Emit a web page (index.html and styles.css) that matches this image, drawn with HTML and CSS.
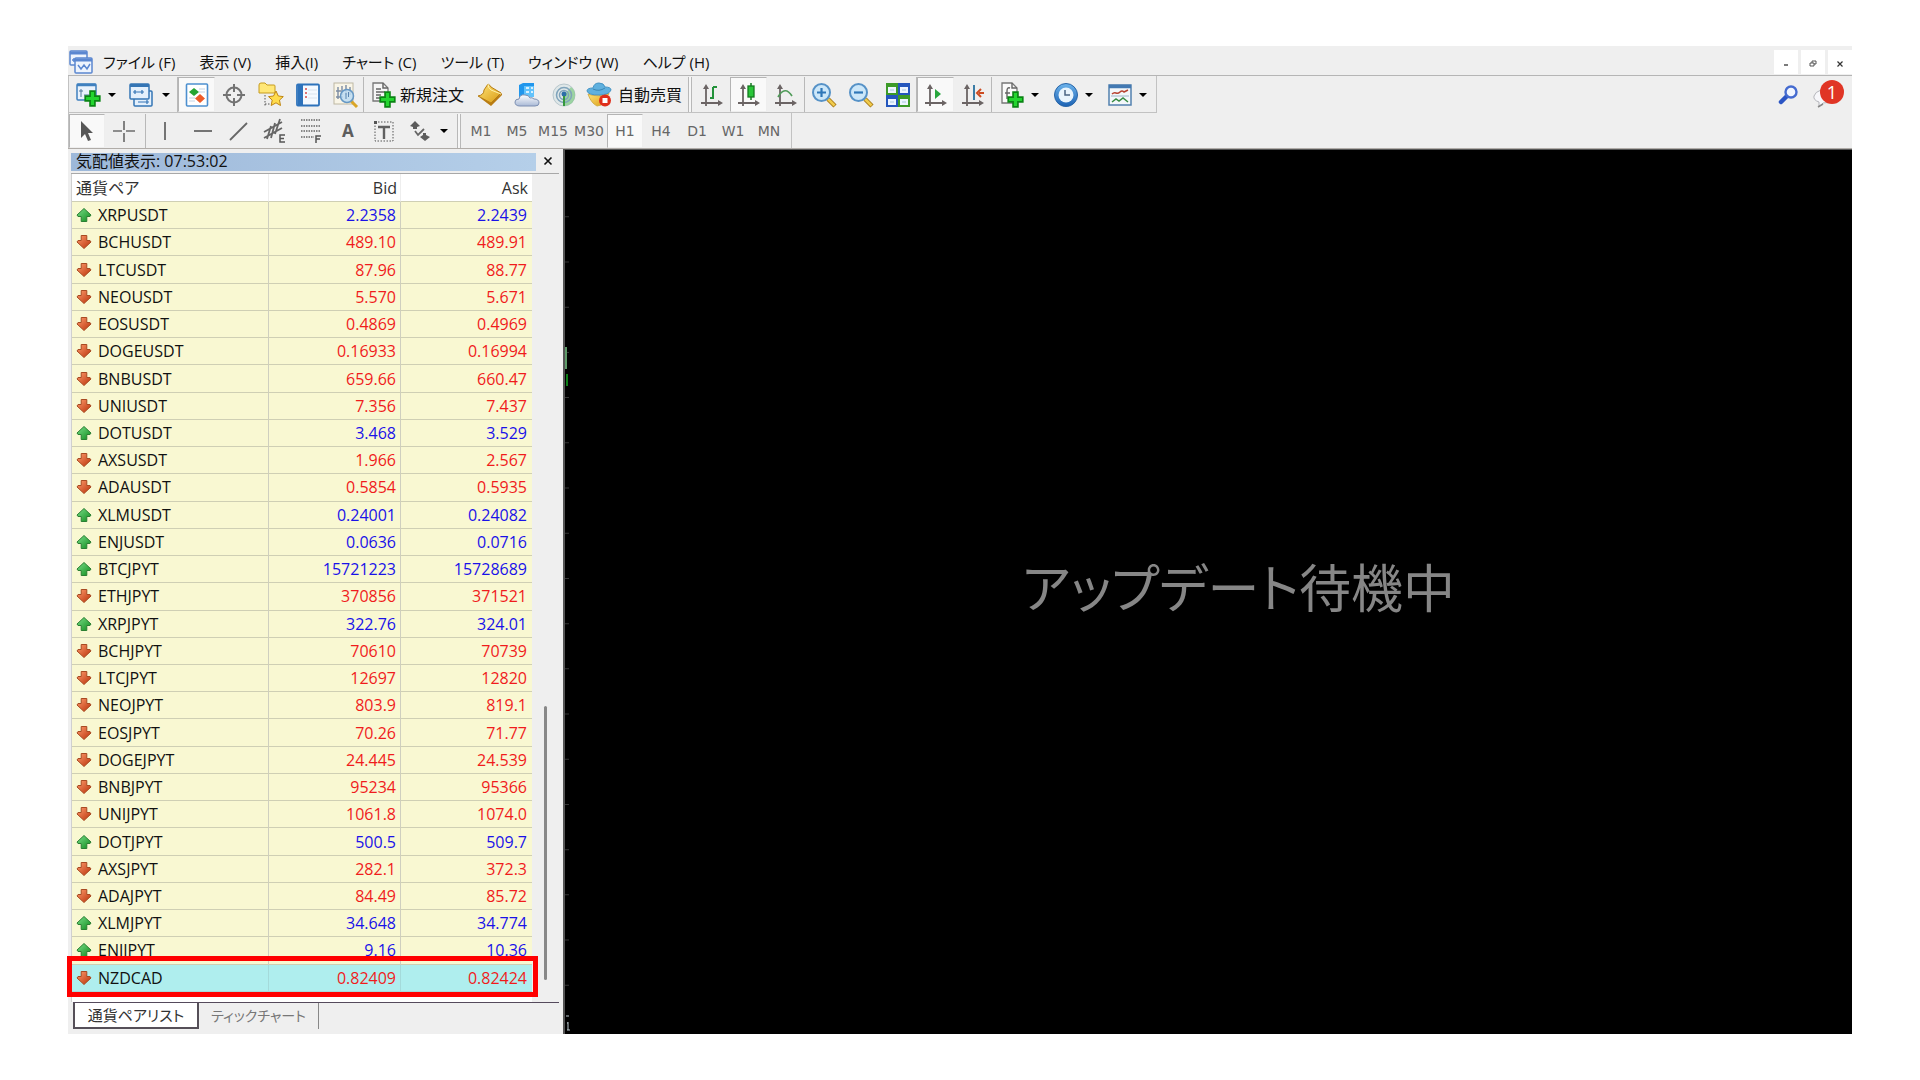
FILE: index.html
```html
<!DOCTYPE html>
<html lang="ja">
<head>
<meta charset="utf-8">
<title>気配値表示</title>
<link rel="stylesheet" href="styles.css">
</head>
<body>
<svg class="defs" aria-hidden="true">
  <defs>
    <linearGradient id="gGreen" x1="0" y1="0" x2="1" y2="1"><stop offset="0" stop-color="#7be08a"/><stop offset="1" stop-color="#0f8a1c"/></linearGradient>
    <linearGradient id="gRed" x1="0" y1="0" x2="1" y2="1"><stop offset="0" stop-color="#ff9d6e"/><stop offset="1" stop-color="#b82f08"/></linearGradient>
    <linearGradient id="gGold" x1="0" y1="0" x2="1" y2="1"><stop offset="0" stop-color="#ffe57a"/><stop offset="1" stop-color="#d99a12"/></linearGradient>
    <linearGradient id="gBlue" x1="0" y1="0" x2="0" y2="1"><stop offset="0" stop-color="#6db4ec"/><stop offset="1" stop-color="#1c62b4"/></linearGradient>
    <linearGradient id="gCloud" x1="0" y1="0" x2="0" y2="1"><stop offset="0" stop-color="#ffffff"/><stop offset="1" stop-color="#a9b9d6"/></linearGradient>
    <symbol id="up" viewBox="0 0 16 14"><path d="M8 .5 15 7 14 8.500H10.800V13.500H5.200V8.500H2L1 7z" fill="url(#gGreen)" stroke="#2b7f33"/></symbol>
    <symbol id="down" viewBox="0 0 16 14"><path d="M8 13.500 15 7 14 5.500H10.800V.5H5.200V5.500H2L1 7z" fill="url(#gRed)" stroke="#a84a22"/></symbol>
    <symbol id="plus" viewBox="0 0 14 14"><path d="M5 1h4v4h4v4H9v4H5V9H1V5h4z" fill="#23d52f" stroke="#0a8414" stroke-width="1.400"/></symbol>
    <symbol id="axes" viewBox="0 0 24 24"><path d="M6 3v20M1 20h19" stroke="#6b6464" stroke-width="1.800"/><path d="M3 6L6 1l3 5zM18 17l5 3-5 3z" fill="#6b6464"/></symbol>
  </defs>
</svg>
<main class="app">
  <header class="menubar">
    <svg class="logo" viewBox="0 0 24 24"><g fill="#eef4fd" stroke="#5b87d0" stroke-width="1.500"><rect x="1" y="1" width="17" height="14" rx="1"/><path d="M1 3h17" stroke-width="3"/><path d="M3 10h4M5 8v4"/><rect x="6" y="8" width="17" height="15" rx="1"/><path d="M6 10h17" stroke-width="3"/><path d="M9 15l3 4 3-4 3 4 3-5" fill="none"/></g></svg>
    <nav class="menus">
      <button>ファイル (F)</button><button>表示 (V)</button><button>挿入(I)</button><button>チャート (C)</button><button>ツール (T)</button><button>ウィンドウ (W)</button><button>ヘルプ (H)</button>
    </nav>
    <div class="window-buttons">
      <button aria-label="最小化"><svg viewBox="0 0 8 8"><path d="M2 5h4" stroke="#333" stroke-width="1.300"/></svg></button>
      <button aria-label="元に戻す"><svg viewBox="0 0 8 8"><path d="M3 3V1h4v3H5M1 3h4v3H1z" fill="none" stroke="#444" stroke-width=".9"/></svg></button>
      <button aria-label="閉じる"><svg viewBox="0 0 8 8"><path d="M1.500 1.500l5 5M6.500 1.500l-5 5" stroke="#333" stroke-width="1.200"/></svg></button>
    </div>
  </header>

  <div class="toolbar-row">
    <div class="toolbar standard">
      <button class="tool drop" aria-label="新規チャート"><svg viewBox="0 0 24 24"><rect x="0" y="1" width="19" height="16" rx="1" fill="#e9f2fc" stroke="#3f80bf" stroke-width="1.500"/><path d="M0 2h19" stroke="#3f80bf" stroke-width="2.500"/><path d="M4 6v8M2 8h4M7 12h5" stroke="#52789d"/><use href="#plus" x="7" y="7" width="17" height="17"/></svg><i class="caret"></i></button>
      <button class="tool drop" aria-label="プロファイル"><svg viewBox="0 0 24 24"><g fill="#e4f0fc" stroke="#3475b5" stroke-width="1.500"><rect x="3" y="8" width="18" height="15" rx="1"/><rect x="-1" y="1" width="19" height="15" rx="1"/><path d="M-1 2.500h19" stroke-width="3"/><path d="M2 9h11M4 7v4M11 7v4M7 19h11M16 17v4" stroke-width="1.200"/></g></svg><i class="caret"></i></button>
      <span class="sep"></span>
      <button class="tool on" aria-label="気配値表示"><svg viewBox="0 0 24 24"><rect x="1.500" y="1" width="21" height="22" rx="1" fill="#fff" stroke="#4d90cf" stroke-width="1.600"/><path d="M14 6h6M14 9h6M4 15h6M4 18h6" stroke="#c3d3e4"/><path d="M9 5l5 4-5 4-5-4z" fill="#27a532"/><path d="M15 11l5 4.500-5 4.500-5-4.500z" fill="#ee5b28"/></svg></button>
      <button class="tool" aria-label="データウィンドウ"><svg viewBox="0 0 24 24"><g fill="none" stroke="#737373" stroke-width="2"><circle cx="12" cy="12" r="7.500"/><path d="M12 1v8M12 15v8M1 12h8M15 12h8"/></g></svg></button>
      <button class="tool" aria-label="ナビゲーター"><svg viewBox="0 0 24 24"><path d="M0 2q0-2 2-2h4l2 2h7q1 0 1 1v7H0z" fill="#ffe777" stroke="#c69b1f"/><path d="M6 12v11M6 21h6" stroke="#555" stroke-dasharray="1.500 1.500"/><path d="M17 8l2.300 5 5 .6-3.800 3.500 1 5.400L17 19.800l-4.800 2.700 1-5.400L9.500 13.600l5-.6z" fill="#ffdc4c" stroke="#bf8613"/></svg></button>
      <button class="tool" aria-label="ターミナル"><svg viewBox="0 0 24 24"><rect x="1" y="1.500" width="22" height="21" rx="1" fill="#f4f9ff" stroke="#2d72bb" stroke-width="1.800"/><path d="M4.500 2v20" stroke="#2d72bb" stroke-width="5"/><path d="M12 7h9M12 11h9M12 15h9" stroke="#d9e3ee"/><path d="M9 6h2M9 10h2M9 14h2" stroke="#d94848" stroke-width="1.500"/></svg></button>
      <button class="tool" aria-label="ストラテジーテスター"><svg viewBox="0 0 24 24"><rect x="1" y="0" width="19" height="21" fill="#f9f5e7" stroke="#beb8a3"/><path d="M5 4v12M9 3v9M13 2v10M17 4v8M3 8h5M3 14h7" stroke="#7c8ca3" stroke-width="1.400"/><path d="M18 18l6 6" stroke="#d9a526" stroke-width="3"/><circle cx="14" cy="13" r="6.500" fill="#bddcf2" fill-opacity=".85" stroke="#6597c4" stroke-width="1.500"/><path d="M13 10v6M15.500 9v5" stroke="#5985b1"/></svg></button>
      <span class="sep"></span>
      <button class="tool wide"><svg viewBox="0 0 24 24"><path d="M2 0h10l5 5v13H2z" fill="#f6f6f6" stroke="#777" stroke-width="1.300"/><path d="M12 0v5h5M5 6h5M5 9h9M5 12h5M5 15h4" fill="none" stroke="#666" stroke-width="1.500"/><use href="#plus" x="8" y="8" width="17" height="17"/></svg><span>新規注文</span></button>
      <button class="tool" aria-label="メタエディター"><svg viewBox="0 0 24 24"><path d="M1 14l12 9 11-11v-2l-11 9z" fill="#b97c12"/><path d="M10 1q2 1 3 3l10 6-10 10L0 13q6-1 6-6z" fill="url(#gGold)" stroke="#b77e14"/><path d="M10 1q0 4 3 6l10 4" fill="none" stroke="#fff1a8"/></svg></button>
      <button class="tool" aria-label="VPS"><svg viewBox="0 0 24 24"><path d="M4 2l4-2h11v14H4z" fill="#2196ec"/><path d="M9 3h10v11H9z" fill="#62c2fb"/><path d="M11 5h3M16 5h2M11 9h3M16 9h2" stroke="#fff" stroke-width="1.500"/><path d="M5 23q-5 0-5-4 0-3 4-3 1-5 6-4 4 0 5 3 2-1 4 1 5 0 5 4 0 3-4 3z" fill="url(#gCloud)" stroke="#7c8fb2"/></svg></button>
      <button class="tool" aria-label="シグナル"><svg viewBox="0 0 24 24"><circle cx="12" cy="12" r="11" fill="#dfe7e8" stroke="#b7c6cc"/><path d="M12 12v11q11-1 11-11 0-5-4-8z" fill="#85cc8b" opacity=".75"/><g fill="none" stroke="#7fa3bb" stroke-width="1.500"><circle cx="12" cy="12" r="7.500"/><circle cx="12" cy="12" r="4.500"/></g><circle cx="12" cy="11" r="2.500" fill="#2d6fa8"/><path d="M12 13v10" stroke="#35983d" stroke-width="2"/></svg></button>
      <button class="tool wide auto"><svg viewBox="0 0 24 24"><path d="M1 11q10 4 21-1l-4 9q-4 4-8 4-6-3-9-12z" fill="url(#gGold)" stroke="#d3b04a"/><path d="M0 8q0-3 6-3Q7 0 12 0t6 4q6 0 6 3-2 5-12 5Q1 12 0 8z" fill="#5fb0de" stroke="#4594c4"/><path d="M6 6q6 3 12-1" fill="none" stroke="#3a86b5"/><circle cx="18" cy="17.500" r="6" fill="#df2e1b"/><rect x="15.500" y="15" width="5" height="5" fill="#fff"/></svg><span>自動売買</span></button>
      <span class="sep grip"></span>
      <button class="tool" aria-label="バーチャート"><svg viewBox="0 0 24 24"><use href="#axes" width="24" height="24"/><path d="M10 15h3V4M13 4h4" fill="none" stroke="#23923a" stroke-width="2"/></svg></button>
      <button class="tool on" aria-label="ローソク足"><svg viewBox="0 0 24 24"><use href="#axes" width="24" height="24"/><path d="M14 0v17" stroke="#147a20" stroke-width="1.500"/><rect x="11" y="3" width="6" height="11" fill="#29c638" stroke="#147a20" stroke-width="1.300"/></svg></button>
      <button class="tool" aria-label="ラインチャート"><svg viewBox="0 0 24 24"><use href="#axes" width="24" height="24"/><path d="M4 14q7-12 14-1" fill="none" stroke="#4f9b58" stroke-width="1.700"/></svg></button>
      <span class="sep"></span>
      <button class="tool" aria-label="拡大"><svg viewBox="0 0 24 24"><path d="M16 16l7 7" stroke="#a87b18" stroke-width="4.500"/><path d="M16 16l6.500 6.500" stroke="#f0cb4c" stroke-width="2.500"/><circle cx="9.500" cy="9.500" r="8.500" fill="#cce7f9" stroke="#5692c7" stroke-width="2"/><path d="M5 9.500h9M9.500 5v9" stroke="#2f77b8" stroke-width="2.200"/></svg></button>
      <button class="tool" aria-label="縮小"><svg viewBox="0 0 24 24"><path d="M16 16l7 7" stroke="#a87b18" stroke-width="4.500"/><path d="M16 16l6.500 6.500" stroke="#f0cb4c" stroke-width="2.500"/><circle cx="9.500" cy="9.500" r="8.500" fill="#cce7f9" stroke="#5692c7" stroke-width="2"/><path d="M5 9.500h9" stroke="#2f77b8" stroke-width="2.200"/></svg></button>
      <button class="tool" aria-label="整列"><svg viewBox="0 0 24 24"><path d="M0 0h12v12H0zM12 12h12v12H12z" fill="#3c9a28"/><path d="M12 0h12v12H12zM0 12h12v12H0z" fill="#2456bd"/><path d="M2 4h8v6H2zM14 4h8v6h-8zM2 16h8v6H2zM14 16h8v6h-8z" fill="#edf5ff"/><path d="M4 7h4M16 7h4M4 19h4M16 19h4" stroke="#a9c7dd"/></svg></button>
      <span class="sep"></span>
      <button class="tool on" aria-label="自動スクロール"><svg viewBox="0 0 24 24"><use href="#axes" width="24" height="24"/><path d="M11 6v10l6-5z" fill="#27a63d"/></svg></button>
      <button class="tool" aria-label="チャートシフト"><svg viewBox="0 0 24 24"><use href="#axes" width="24" height="24"/><path d="M13 2v15" stroke="#3b7ca6" stroke-width="2"/><path d="M23 10h-5M20 6l-4 4 4 4" fill="none" stroke="#cc4b21" stroke-width="2"/></svg></button>
      <span class="sep"></span>
      <button class="tool drop" aria-label="インディケータ"><svg viewBox="0 0 24 24"><path d="M2 0h10l5 5v15H2z" fill="#fafafa" stroke="#777" stroke-width="1.300"/><path d="M12 0v5h5M10 5q-3-1-3 3v8M5 10h5" fill="none" stroke="#666" stroke-width="1.400"/><use href="#plus" x="7" y="8" width="17" height="17"/></svg><i class="caret"></i></button>
      <button class="tool drop" aria-label="時間足"><svg viewBox="0 0 24 24"><circle cx="12" cy="12" r="11.500" fill="url(#gBlue)" stroke="#2865a8"/><circle cx="12" cy="12" r="7.500" fill="#e8f4fd"/><path d="M11 7v5h5" fill="none" stroke="#4a6483" stroke-width="1.500"/></svg><i class="caret"></i></button>
      <button class="tool drop" aria-label="テンプレート"><svg viewBox="0 0 24 24"><rect x="1" y="2" width="22" height="20" fill="#f3f7fa" stroke="#5381af" stroke-width="1.500"/><path d="M1 3.500h22" stroke="#4379b2" stroke-width="3.500"/><path d="M4 11q2-2 4-1t4-1 4 0l4-2" fill="none" stroke="#b84332" stroke-width="1.500"/><path d="M3 13h18" stroke="#9db4c9"/><path d="M4 19l4-3 3 2 4-3 5 4" fill="none" stroke="#388b43" stroke-width="1.500"/></svg><i class="caret"></i></button>
    </div>
    <div class="status-tools">
      <button class="tool" aria-label="検索"><svg viewBox="0 0 24 24"><path d="M9 13l-6 6" stroke="#2b55c4" stroke-width="4.500" stroke-linecap="round"/><circle cx="13" cy="9" r="5.500" fill="#f2f6ff" stroke="#456bd0" stroke-width="2.400"/></svg></button>
      <button class="tool notice" aria-label="通知"><svg viewBox="0 0 24 24"><path d="M6 7q9-2 11 6 1 7-9 7l-4 4v-5Q-2 17-1 13t7-6z" fill="#f7f7fa" stroke="#b4b5ba"/><path d="M3 24l5-3" stroke="#888" stroke-width="1.500"/></svg><span class="count">1</span></button>
    </div>
  </div>

  <div class="toolbar-row lines">
    <div class="toolbar drawing">
      <button class="tool on" aria-label="カーソル"><svg viewBox="0 0 24 24"><path d="M6 2v17l4-4 3 7 3-1-3-7h5z" fill="#575757"/></svg></button>
      <button class="tool" aria-label="クロスヘア"><svg viewBox="0 0 24 24"><path d="M13 2v9M13 14v9M2 12h9M15 12h9" stroke="#6e6e6e" stroke-width="1.700"/></svg></button>
      <span class="sep"></span>
      <button class="tool" aria-label="垂直線"><svg viewBox="0 0 24 24"><path d="M9 3v18" stroke="#666" stroke-width="1.800"/></svg></button>
      <button class="tool" aria-label="水平線"><svg viewBox="0 0 24 24"><path d="M2 12h18" stroke="#666" stroke-width="1.800"/></svg></button>
      <button class="tool" aria-label="トレンドライン"><svg viewBox="0 0 24 24"><path d="M2 21L19 4" stroke="#666" stroke-width="1.800"/></svg></button>
      <button class="tool" aria-label="チャネル"><svg viewBox="0 0 24 24"><path d="M0 13L18 3M0 19L18 9M3 20l4-13M7 19l4-15M11 15l5-15" stroke="#666" stroke-width="1.800"/><path d="M21 16h-5v7h5M16 19.500h4" fill="none" stroke="#555" stroke-width="1.500"/></svg></button>
      <button class="tool" aria-label="フィボナッチ"><svg viewBox="0 0 24 24"><path d="M1 1h19M1 7h19M1 12h19M1 18h13" stroke="#666" stroke-width="1.500" stroke-dasharray="1.500 1"/><path d="M21 17h-5v7M16 20h4" fill="none" stroke="#555" stroke-width="1.500"/></svg></button>
      <button class="tool glyph" aria-label="テキスト">A</button>
      <button class="tool" aria-label="テキストラベル"><svg viewBox="0 0 24 24"><rect x="3" y="3" width="18" height="19" fill="none" stroke="#555" stroke-dasharray="1.500 1.500"/><path d="M2 2h3v3H2z" fill="#555"/><path d="M6 8h12M12 8v12" stroke="#606060" stroke-width="2.400"/></svg></button>
      <button class="tool drop" aria-label="矢印"><svg viewBox="0 0 24 24"><path d="M6 2l5 5-3 1v2H4V8L1 7zM16 22l-5-4 3-2v-2h3v2l4 2z" fill="#5c5c5c"/><path d="M6 12l3 4 6-6" fill="none" stroke="#666" stroke-width="1.800"/></svg><i class="caret"></i></button>
      <span class="sep grip"></span>
      <div class="periods">
        <button>M1</button><button>M5</button><button>M15</button><button>M30</button><button class="on">H1</button><button>H4</button><button>D1</button><button>W1</button><button>MN</button>
      </div>
    </div>
  </div>

  <div class="workspace">
    <section class="watch">
      <div class="watch-title"><h1>気配値表示: 07:53:02</h1><button aria-label="閉じる"><svg viewBox="0 0 10 10"><path d="M1.500 1.500l7 7M8.500 1.500l-7 7" stroke="#111" stroke-width="1.600"/></svg></button></div>
      <div class="watch-body">
        <table class="quotes">
          <thead><tr><th>通貨ペア</th><th>Bid</th><th>Ask</th></tr></thead>
          <tbody id="rows"></tbody>
        </table>
        <div class="scroll"><div class="thumb"></div></div>
      </div>
      <div class="tabs"><button class="active">通貨ペアリスト</button><button>ティックチャート</button></div>
    </section>
    <section class="chart">
      <svg class="edge" viewBox="0 0 6 880" preserveAspectRatio="none" aria-hidden="true">
        <path d="M2 66v800" stroke="#333" stroke-dasharray="1 44" stroke-width="4"/>
        <path d="M1 196v22" stroke="#5d9a68" stroke-width="2"/><path d="M2 223v12" stroke="#0c7d16" stroke-width="2"/>
        <path d="M1 862h3M3 868v8M2 869h1M2 876h3" stroke="#b9c6cc" fill="none"/>
      </svg>
      <p>アップデート待機中</p>
    </section>
  </div>
</main>
<script src="quotes.js"></script>
</body>
</html>
```
FILE: styles.css
```css
* { box-sizing: border-box; }
body {
  margin: 0;
  background: #fff;
  color: #111;
  font: 16px/20px "Open Sans", "Noto Sans CJK JP", sans-serif;
  font-feature-settings: "palt";
}
button {
  margin: 0;
  padding: 0;
  border: 0;
  background: none;
  color: inherit;
  font: inherit;
  font-feature-settings: inherit;
}
.defs { position: absolute; width: 0; height: 0; }
.app {
  display: flex;
  flex-direction: column;
  min-height: calc(100vh - 92px);
  margin: 46px 68px;
  background: #efefef;
}

.menubar { display: flex; align-items: center; height: 30px; padding: 2px 0 0 1px; border-bottom: 1px solid #b5b5b5; }
.logo { width: 24px; height: 24px; margin-right: 10px; }
.menus { display: flex; gap: 24px; font-size: 15px; white-space: nowrap; }
.window-buttons { display: flex; gap: 3px; margin-left: auto; }
.window-buttons button { width: 24px; height: 24px; background: #fff; }
.window-buttons svg { width: 8px; height: 8px; }

.toolbar-row { display: flex; justify-content: space-between; height: 37px; }
.toolbar { display: flex; align-items: stretch; padding: 1px 2px 0 0; border: 1px solid #c2c2c2; border-width: 0 1px 1px; }
.lines { height: 36px; border-bottom: 1px solid #b0aca8; }
.drawing { padding-right: 4px; border-bottom: 0; }
.tool { display: flex; align-items: center; justify-content: center; width: 37px; border: 1px solid transparent; flex-shrink: 0; }
.tool svg { width: 24px; height: 24px; flex-shrink: 0; overflow: visible; }
.tool.drop { width: 54px; gap: 7px; }
.tool.wide { width: 107px; gap: 5px; white-space: nowrap; }
.tool.auto { width: 105px; gap: 7px; }
.tool.on, .periods .on { background: #f9f9f9; border: 1px solid #b4b4b4; border-right-color: #eee; border-bottom-color: #eee; }
.caret { border: 4px solid transparent; border-top-color: #000; border-bottom: 0; }
.sep { width: 1px; background: #b8b8b8; }
.sep.grip { width: 4px; margin: 0 1px; border: 1px solid #b8b8b8; border-width: 0 1px; background: #f6f6f6; }
.drawing .tool { width: 36px; }
.drawing .drop { width: 53px; }
.drawing .sep:not(.grip) { margin: 0 4px; }
.drawing .grip { margin: 0 2px; }
.glyph { color: #5d5d5d; font: bold 17px/20px "Noto Sans", sans-serif; }
.status-tools { display: flex; padding-right: 7px; }
.notice { position: relative; }
.count { position: absolute; top: 3px; right: 0; width: 24px; height: 24px; border-radius: 50%; background: #e03525; color: #fff; font-size: 18px; line-height: 24px; text-align: center; }
.periods { display: flex; color: #666; font: 14px/20px "DejaVu Sans", sans-serif; }
.periods button { width: 36px; border: 1px solid transparent; }

.workspace { display: flex; flex: 1; }
.watch { display: flex; flex-direction: column; width: 495px; padding: 3px 4px 4px 3px; flex-shrink: 0; }
.watch-title { display: flex; align-items: flex-start; justify-content: space-between; height: 22px; padding-right: 4px; border-bottom: 1px solid #a8a8a8; background: linear-gradient(90deg, #9db8d9, #b5cfe9) 0 1px / 465px 18px no-repeat; }
.watch-title h1 { margin: 0; padding-left: 5px; font-size: 16px; line-height: 19px; font-weight: 400; }
.watch-title button { display: flex; padding: 4px 2px; }
.watch-title svg { width: 10px; height: 10px; }
.watch-body { display: flex; flex: 1; border-left: 1px solid #d0d0d0; padding-bottom: 10px; background: linear-gradient(90deg, #fff 460px, #efefef 460px); }
.quotes { width: 461px; border-collapse: separate; border-spacing: 0; table-layout: fixed; }
.quotes th { height: 28px; padding: 0 4px; background: #fff; color: #333; font-weight: 400; line-height: 20px; text-align: right; }
.quotes th:first-child { width: 197px; text-align: left; }
.quotes th:nth-child(2) { width: 132px; padding-right: 3px; }
.quotes th, .quotes td { border-right: 1px solid #cfcfbf; border-bottom: 1px solid #cfcfb4; }
.quotes th { border-right-color: #eee; }
.quotes th:last-child, .quotes td:last-child { border-right: 0; }
.quotes td { padding: 0 4px; background: #f9f8d2; line-height: 20px; text-align: right; }
.quotes td:last-child { padding-right: 5px; }
.quotes td:first-child { text-align: left; }
.pair { display: flex; align-items: center; gap: 6px; }
.pair svg { width: 16px; height: 14px; }
.rise { color: #1a12e8; }
.fall { color: #f01c1c; }
.quotes .selected td { background: #afeeee; border-color: #a4dada; }
.selected { position: relative; }
.marker { position: absolute; inset: -9px -6px -5px -5px; border: 5px solid #f00; pointer-events: none; }
.scroll { display: flex; flex-direction: column; justify-content: flex-end; width: 27px; padding: 0 12px 12px; }
.thumb { width: 3px; height: 34%; background: #888; border-radius: 2px; }
.tabs { display: flex; height: 28px; margin-left: 2px; border-top: 1px solid #554a5c; white-space: nowrap; }
.tabs button { height: 26px; width: 120px; border-right: 1px solid #888; color: #777; font-size: 14px; line-height: 24px; }
.tabs .active { width: 126px; border: 2px solid #554f58; border-top: 0; background: #fff; color: #333; font-size: 15px; }
.chart { position: relative; display: flex; flex: 1; align-items: center; justify-content: center; padding: 0 0 12px 60px; border: 2px solid #555; border-width: 1px 0 0 2px; background: #000; color: #868686; }
.edge { position: absolute; top: 0; left: 0; width: 6px; height: 100%; }
.chart p { margin: 0; font: 52px/64px "Noto Sans CJK JP", sans-serif; font-feature-settings: "palt"; white-space: nowrap; }
```
FILE: quotes.js
```js
const quotes = `u XRPUSDT 2.2358 2.2439
d BCHUSDT 489.10 489.91
d LTCUSDT 87.96 88.77
d NEOUSDT 5.570 5.671
d EOSUSDT 0.4869 0.4969
d DOGEUSDT 0.16933 0.16994
d BNBUSDT 659.66 660.47
d UNIUSDT 7.356 7.437
u DOTUSDT 3.468 3.529
d AXSUSDT 1.966 2.567
d ADAUSDT 0.5854 0.5935
u XLMUSDT 0.24001 0.24082
u ENJUSDT 0.0636 0.0716
u BTCJPYT 15721223 15728689
d ETHJPYT 370856 371521
u XRPJPYT 322.76 324.01
d BCHJPYT 70610 70739
d LTCJPYT 12697 12820
d NEOJPYT 803.9 819.1
d EOSJPYT 70.26 71.77
d DOGEJPYT 24.445 24.539
d BNBJPYT 95234 95366
d UNIJPYT 1061.8 1074.0
u DOTJPYT 500.5 509.7
d AXSJPYT 282.1 372.3
d ADAJPYT 84.49 85.72
u XLMJPYT 34.648 34.774
u ENJJPYT 9.16 10.36
d NZDCAD 0.82409 0.82424`.split("\n").map(line => line.split(" "));

document.getElementById("rows").innerHTML = quotes.map(([dir, name, bid, ask], i) => {
  const last = i === quotes.length - 1;
  const tone = dir === "u" ? "rise" : "fall";
  return `<tr class="${last ? "selected" : ""}"><td><span class="pair"><svg><use href="#${dir === "u" ? "up" : "down"}"/></svg>${name}</span></td>` +
    `<td class="${tone}">${bid}</td><td class="${tone}">${ask}${last ? '<span class="marker"></span>' : ""}</td></tr>`;
}).join("");
```
